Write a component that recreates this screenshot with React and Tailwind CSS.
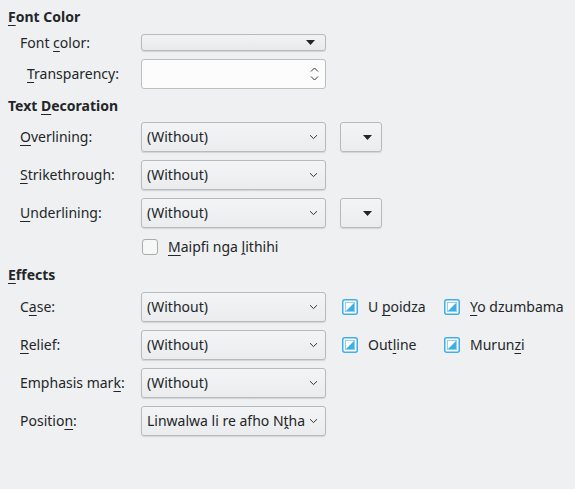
import React from "react";

const U = ({ children }) => (
  <span className="underline decoration-1 underline-offset-[3px]">{children}</span>
);

const Chevron = () => (
  <svg width="9" height="6" viewBox="0 0 9 6" className="shrink-0">
    <path d="M1 1.2 L4.5 4.6 L8 1.2" fill="none" stroke="#31363b" strokeWidth="1" />
  </svg>
);

const Tri = () => (
  <svg width="9" height="5" viewBox="0 0 9 5" className="shrink-0">
    <path d="M0 0 H9 L4.5 5 Z" fill="#232629" />
  </svg>
);

const Combo = ({ children }) => (
  <div className="w-[185px] h-[30px] rounded-[3px] border border-[#b8babc] bg-gradient-to-b from-[#f3f4f5] to-[#ebeced] shadow-[0_1px_1px_rgba(0,0,0,0.12)] flex items-center pl-[5px] pr-[7px]">
    <div className="flex-1 whitespace-nowrap overflow-hidden">{children}</div>
    <Chevron />
  </div>
);

const SmallBtn = () => (
  <div className="ml-[14px] w-[42px] h-[30px] rounded-[3px] border border-[#b8babc] bg-gradient-to-b from-[#f3f4f5] to-[#ebeced] shadow-[0_1px_1px_rgba(0,0,0,0.12)] flex items-center justify-end pr-[9px]">
    <Tri />
  </div>
);

const CheckOn = () => (
  <svg width="16" height="16" viewBox="0 0 16 16" className="shrink-0">
    <rect x="0.75" y="0.75" width="14.5" height="14.5" rx="2" fill="#fcfcfc" stroke="#3daee9" strokeWidth="1.5" />
    <rect x="3.5" y="3.5" width="9" height="9" fill="none" stroke="#93cee9" strokeWidth="1" />
    <path d="M4 12 L12 12 L12 4 Z" fill="#3daee9" />
  </svg>
);

const CheckOff = () => (
  <svg width="16" height="16" viewBox="0 0 16 16" className="shrink-0">
    <rect x="0.5" y="0.5" width="15" height="15" rx="2.5" fill="#f7f7f8" stroke="#a9abad" strokeWidth="1" />
  </svg>
);

const Row = ({ label, pl = "pl-[20px]", children, h = "h-[30px]", mt = "mt-[8px]" }) => (
  <div className={"flex items-center " + h + " " + mt}>
    <div className={"w-[141px] shrink-0 whitespace-nowrap " + pl}>{label}</div>
    {children}
  </div>
);

const Header = ({ children, mt }) => (
  <div className={"h-[18px] leading-[18px] pl-[8px] font-bold " + mt}>{children}</div>
);

export default function App() {
  return (
    <div
      className="w-[575px] h-[489px] bg-[#eff0f1] text-[#232629] text-[14px] leading-[18px] overflow-hidden pt-[8px]"
      style={{ fontFamily: '"Noto Sans", sans-serif' }}
    >
      <Header mt="mt-0">
        <U>F</U>ont Color
      </Header>
      <Row label={<>Font <U>c</U>olor:</>} h="h-[17px]" mt="mt-[8px]">
        <div className="w-[185px] h-[17px] rounded-[3px] border border-[#b8babc] bg-gradient-to-b from-[#f1f2f3] to-[#e9eaeb] shadow-[0_1px_1px_rgba(0,0,0,0.12)] flex items-center justify-end pr-[10px]">
          <Tri />
        </div>
      </Row>
      <Row label={<><U>T</U>ransparency:</>} pl="pl-[27px]" mt="mt-[8px]">
        <div className="w-[185px] h-[30px] rounded-[3px] border border-[#bcbebf] bg-[#fcfcfc] flex flex-col items-end justify-center pr-[6px] gap-[4px]">
          <svg width="9" height="5" viewBox="0 0 9 5">
            <path d="M1 4.5 L4.5 1 L8 4.5" fill="none" stroke="#31363b" strokeWidth="1" />
          </svg>
          <svg width="9" height="5" viewBox="0 0 9 5">
            <path d="M1 0.5 L4.5 4 L8 0.5" fill="none" stroke="#31363b" strokeWidth="1" />
          </svg>
        </div>
      </Row>
      <Header mt="mt-[8px]">
        Text <U>D</U>ecoration
      </Header>
      <Row label={<><U>O</U>verlining:</>} mt="mt-[7px]">
        <Combo>(Without)</Combo>
        <SmallBtn />
      </Row>
      <Row label={<><U>S</U>trikethrough:</>}>
        <Combo>(Without)</Combo>
      </Row>
      <Row label={<><U>U</U>nderlining:</>}>
        <Combo>(Without)</Combo>
        <SmallBtn />
      </Row>
      <div className="flex items-center h-[16px] mt-[11px] pl-[142px] gap-[10px]">
        <CheckOff />
        <span className="whitespace-nowrap">
          <U>M</U>aipfi nga ḽithihi
        </span>
      </div>
      <Header mt="mt-[11px]">
        <U>E</U>ffects
      </Header>
      <Row label={<>C<U>a</U>se:</>} mt="mt-[8px]">
        <Combo>(Without)</Combo>
        <div className="flex items-center ml-[16px] gap-[10px] w-[102px]">
          <CheckOn />
          <span className="whitespace-nowrap">
            U <U>p</U>oidza
          </span>
        </div>
        <div className="flex items-center gap-[10px]">
          <CheckOn />
          <span className="whitespace-nowrap">
            <U>Y</U>o dzumbama
          </span>
        </div>
      </Row>
      <Row label={<><U>R</U>elief:</>}>
        <Combo>(Without)</Combo>
        <div className="flex items-center ml-[16px] gap-[10px] w-[102px]">
          <CheckOn />
          <span className="whitespace-nowrap">
            Out<U>l</U>ine
          </span>
        </div>
        <div className="flex items-center gap-[10px]">
          <CheckOn />
          <span className="whitespace-nowrap">
            Murun<U>z</U>i
          </span>
        </div>
      </Row>
      <Row label={<>Emphasis mar<U>k</U>:</>}>
        <Combo>(Without)</Combo>
      </Row>
      <Row label={<>Positio<U>n</U>:</>}>
        <Combo>Linwalwa li re afho Nṱha</Combo>
      </Row>
    </div>
  );
}
